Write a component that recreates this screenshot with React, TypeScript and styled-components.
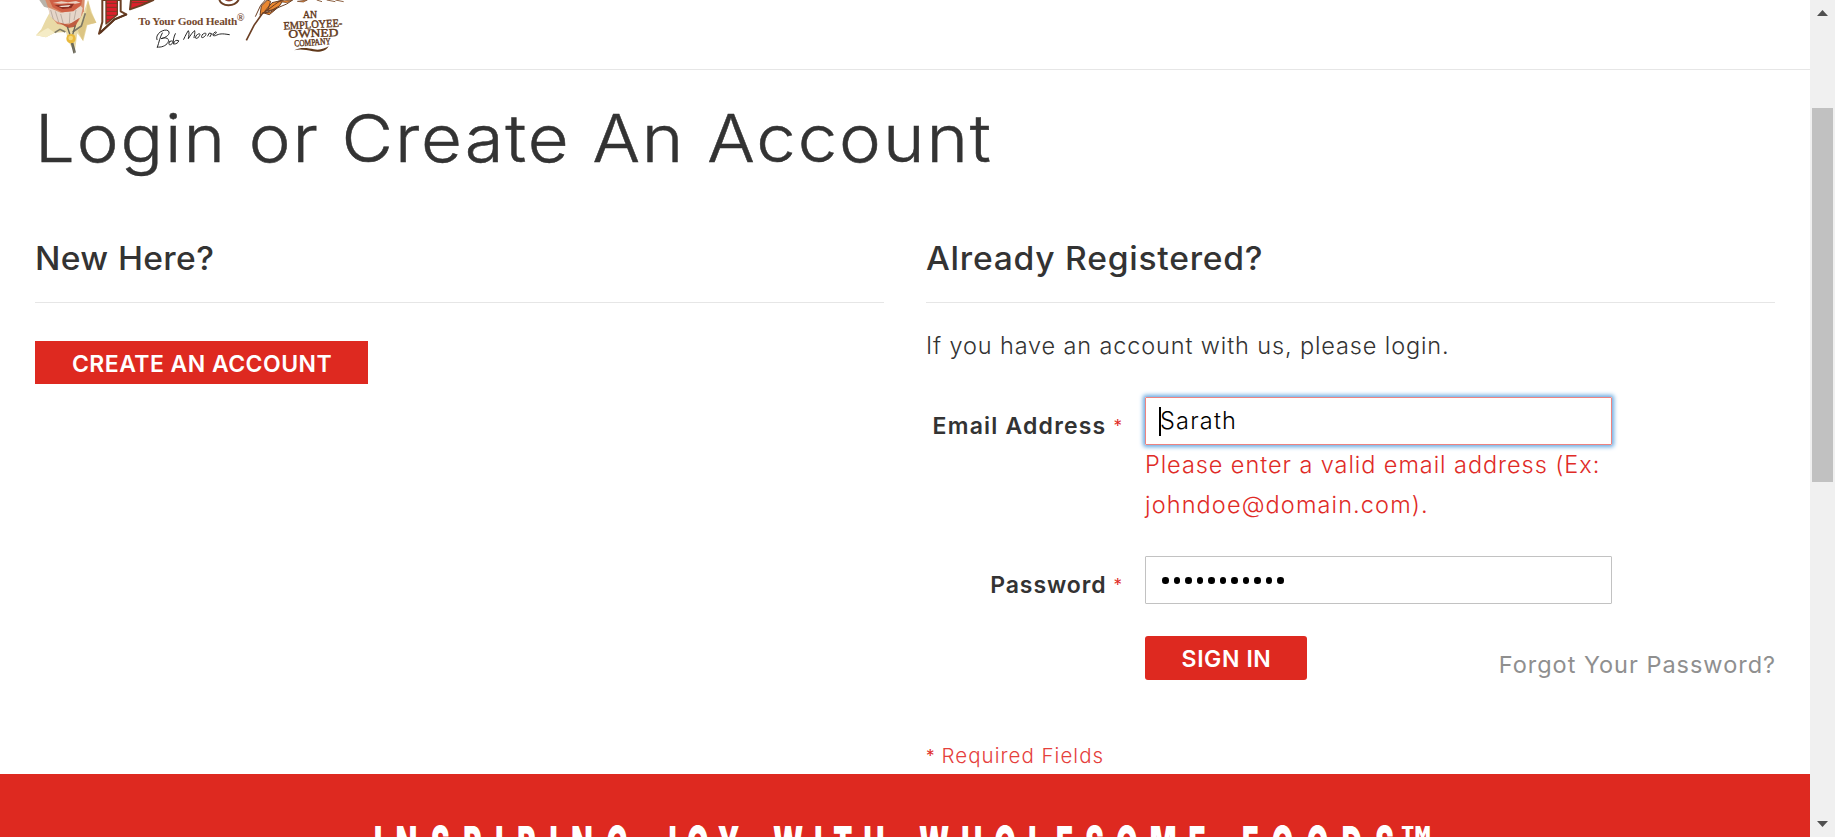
import React from "react";
import styled, { createGlobalStyle } from "styled-components";

const RED = "#de2920";
const INK = "#333333";

const GlobalStyle = createGlobalStyle`
  * { box-sizing: border-box; }
  body {
    margin: 0;
    background: #fff;
    color: ${INK};
    font-family: Inter, "Liberation Sans", sans-serif;
    overflow: hidden;
  }
`;

const Viewport = styled.div`
  display: flex;
  width: 1835px;
  height: 837px;
  overflow: hidden;
`;

const Page = styled.div`
  flex: 1;
  height: 837px;
  overflow: hidden;
`;

const Header = styled.header`
  height: 70px;
  padding-left: 20px;
  border-bottom: 1px solid #e6e6e6;
`;

const LogoArt = styled.svg`
  display: block;
  width: 340px;
  height: 68px;
`;

const Main = styled.main`
  height: 704px;
  padding: 28px 35px 0;
`;

const Title = styled.h1`
  margin: 0 0 60px;
  font-size: 66px;
  font-weight: 300;
  line-height: 80px;
  letter-spacing: 1.8px;
  white-space: nowrap;
  -webkit-text-stroke: 0.5px ${INK};
  transform: scaleX(1.07);
  transform-origin: left top;
`;

const Columns = styled.div`
  display: grid;
  grid-template-columns: 849px 849px;
  justify-content: space-between;
`;

const Column = styled.section`
  min-width: 0;
`;

const SectionHead = styled.div`
  height: 65px;
  padding-top: 1px;
  border-bottom: 1px solid #e6e6e6;
`;

const SectionTitle = styled.h2<{ $spacing: string }>`
  display: inline-block;
  margin: 0;
  font-size: 32px;
  font-weight: 500;
  line-height: 40px;
  letter-spacing: ${(p) => p.$spacing};
  white-space: nowrap;
  transform: scaleX(1.05);
  transform-origin: left top;
`;

const Button = styled.button<{ $width: number; $height: number; $round?: boolean; $spacing: string }>`
  display: flex;
  align-items: center;
  justify-content: center;
  flex: none;
  width: ${(p) => p.$width}px;
  height: ${(p) => p.$height}px;
  padding: 2px 0 0 1px;
  border: 0;
  border-radius: ${(p) => (p.$round ? 3 : 0)}px;
  background: ${RED};
  color: #fff;
  font: 600 23px Inter, sans-serif;
  letter-spacing: ${(p) => p.$spacing};
`;

const CreateRow = styled.div`
  padding-top: 38px;
`;

const Intro = styled.p`
  margin: 23px 0 31px;
  font-size: 23.5px;
  font-weight: 300;
  line-height: 40px;
  letter-spacing: 0.87px;
`;

const Field = styled.div`
  display: grid;
  grid-template-columns: 196px 467px;
  column-gap: 23px;
`;

const Label = styled.label<{ $spacing: string }>`
  display: flex;
  justify-content: flex-end;
  gap: 7px;
  height: 48px;
  padding-top: 9px;
  font-size: 23px;
  font-weight: 600;
  line-height: 40px;
  letter-spacing: ${(p) => p.$spacing};
`;

const Star = styled.span`
  color: #e02b27;
  font-size: 17px;
  font-weight: 400;
  letter-spacing: 0;
`;

const Control = styled.div<{ $invalid?: boolean }>`
  display: flex;
  align-items: center;
  height: 48px;
  padding-left: 14px;
  border: 1px solid ${(p) => (p.$invalid ? "#ed8380" : "#c2c2c2")};
  border-radius: 1px;
  box-shadow: ${(p) => (p.$invalid ? "0 0 4px 1.5px #68a8e0" : "none")};
  color: #000;
  font-size: 23.5px;
  font-weight: 300;
  letter-spacing: 1.2px;
`;

const Value = styled.span`
  padding-bottom: 2px;
`;

const Caret = styled.span`
  width: 2px;
  height: 29px;
  margin: 0 -1px 0 -1px;
  background: #000;
`;

const Dots = styled.span`
  display: flex;
  gap: 5px;
  padding: 1px 0 0 2px;
`;

const Dot = styled.i`
  width: 6.5px;
  height: 6.5px;
  border-radius: 50%;
  background: #000;
`;

const ErrorText = styled.p`
  margin: 0 0 31px;
  color: #e02b27;
  font-size: 23.5px;
  font-weight: 300;
  line-height: 40px;
  white-space: nowrap;
`;

const ErrorLine = styled.span<{ $spacing: string }>`
  display: block;
  letter-spacing: ${(p) => p.$spacing};
`;

const Actions = styled.div`
  display: flex;
  justify-content: space-between;
  align-items: flex-start;
  height: 76px;
  padding: 32px 0 0 219px;
`;

const Forgot = styled.a`
  padding-top: 9px;
  margin-right: -1px;
  color: #8f8f8f;
  font-size: 23.5px;
  font-weight: 400;
  line-height: 40px;
  letter-spacing: 0.98px;
  white-space: nowrap;
`;

const Required = styled.p`
  display: flex;
  gap: 7px;
  margin: 61px 0 0;
  color: #e5403c;
  font-size: 20.5px;
  font-weight: 300;
  line-height: 30px;
  letter-spacing: 1.02px;
`;

const Banner = styled.footer`
  display: flex;
  height: 63px;
  padding: 46px 0 0 374px;
  overflow: hidden;
  background: ${RED};
  color: #fff;
`;

const BannerWord = styled.span<{ $slot: number; $spacing: number; $scale?: number }>`
  flex: none;
  width: ${(p) => p.$slot}px;
  font-size: 48px;
  font-weight: 900;
  line-height: 48px;
  letter-spacing: ${(p) => p.$spacing}px;
  white-space: nowrap;
  transform: scaleX(${(p) => p.$scale ?? 0.58});
  transform-origin: left top;
`;

const ScrollTrack = styled.div`
  display: flex;
  flex-direction: column;
  align-items: center;
  width: 25px;
  height: 837px;
  padding: 10px 0;
  background: #f0f0f0;
`;

const ScrollThumb = styled.div`
  width: 21px;
  height: 374px;
  margin: 92px 0 auto;
  background: #c1c1c1;
`;

const ArrowIcon = styled.svg`
  display: block;
  width: 11px;
  height: 6px;
  fill: #505050;
`;

function Logo() {
  return (
    <LogoArt viewBox="0 0 1020 204" aria-label="Bob's Red Mill">
      {/* portrait: shirt collar, beard, mouth and bolo tie */}
      <path d="M48 106 64 88 77 60 88 40 190 40 204 0 216 38 229 68 202 76 190 124 172 100 164 159 146 126 138 96 104 98 78 112Z" fill="#e9daa6" />
      <path d="M48 106 72 90 84 84 104 98 78 112Z" fill="#f5ecc6" />
      <path d="M204 0 212 36 229 68 200 74 188 122 174 92 196 54Z" fill="#dcc584" />
      <path d="M104 98 120 88 136 96M158 96 184 78 196 40" fill="none" stroke="#7d7865" strokeWidth="5" />
      <path d="M58 0H84L92 26 72 20Z" fill="#b9b3aa" />
      <path d="M76 0H194L192 34 174 66 150 78 112 72 94 50Z" fill="#d98e6c" />
      <path d="M84 22 98 28 122 38 160 32 182 18 188 24 182 52 160 68 132 72 108 64 90 48Z" fill="#e6d6c9" />
      <path d="M92 30 100 58M106 34 116 66M122 42 130 72M150 38 148 70M168 30 162 60" stroke="#bcaea2" strokeWidth="3" fill="none" />
      <path d="M88 0H186L184 14 160 34 126 37 98 22Z" fill="#cf5f44" />
      <path d="M98 9 124 4 144 7 168 3 182 8 166 11 144 10 122 11Z" fill="#ead2c2" />
      <path d="M104 16 132 14 162 11 154 24 128 27Z" fill="#8c2f22" />
      <path d="M116 18 152 15 146 20 124 21Z" fill="#f4e6da" />
      <path d="M118 68 146 74 178 54 166 80 144 84Z" fill="#bf5c40" />
      <path d="M142 80 150 104M166 76 158 104M154 128 162 160M158 128 166 158" stroke="#686659" strokeWidth="4" fill="none" />
      <circle cx="153" cy="116" r="14" fill="#e9b93c" />
      <circle cx="152" cy="114" r="7" fill="#f6d979" />

      {/* lower ends of the red lettering */}
      <g stroke="#6b3f24" strokeLinejoin="round">
        <path d="M247 0V66L237 101 284 58 319 43 302 34V0Z" fill="#fff" strokeWidth="6" />
        <path d="M258 0V72L292 44V0Z" fill="#dc1f2b" strokeWidth="4" />
        <path d="M333 0 330 28 364 16 400 0Z" fill="#dc1f2b" strokeWidth="6" />
        <path d="M258 10H292M258 22H292M258 34H292M258 46H290M258 58H276M336 8H380" strokeWidth="2.5" fill="none" />
        <path d="M598 0C606 20 642 22 656 0" fill="none" strokeWidth="6" />
        <path d="M612 -4C620 5 634 5 642 -4" fill="#dc1f2b" strokeWidth="3" />
      </g>
      <path d="M240 99 284 58 320 43" fill="none" stroke="#5a341e" strokeWidth="6" />

      {/* wheat stalk */}
      <path d="M679 121 702 76 726 42 748 8" fill="none" stroke="#6b3f24" strokeWidth="5" />
      <path d="M720 46 724 18 742 0 752 4 744 28ZM734 34 756 8 790 0 778 18 756 30ZM728 38 752 36 772 24 748 44Z" fill="#e98731" stroke="#6b3f24" strokeWidth="3" />
      <path d="M706 50 722 16 736 0M730 40 764 14 784 0M738 38 800 12 818 0" fill="none" stroke="#6b3f24" strokeWidth="3" />
      <path d="M774 4 818 0 800 8ZM832 4 862 0 850 6Z" fill="#e98731" stroke="#6b3f24" strokeWidth="2" />
      <path d="M890 0 906 5M920 0 946 5M946 0 971 5" fill="none" stroke="#8c6142" strokeWidth="3" />

      <g fill="#75492f" fontFamily="Liberation Serif, serif" fontWeight="700">
        <text x="355" y="74" fontSize="34" textLength="297" lengthAdjust="spacing">To Your Good Health</text>
        <text x="650" y="62" fontSize="31" fontWeight="700">®</text>
        <g fill="#5f3719" fontWeight="400" stroke="#5f3719" strokeWidth="1.2">
          <text x="849" y="54" fontSize="31" textLength="42" lengthAdjust="spacingAndGlyphs">AN</text>
          <text x="791" y="84" fontSize="33" textLength="176" lengthAdjust="spacingAndGlyphs" transform="rotate(-3 880 78)">EMPLOYEE-</text>
          <text x="805" y="111" fontSize="34" textLength="150" lengthAdjust="spacingAndGlyphs" transform="rotate(-2 880 100)">OWNED</text>
          <text x="823" y="136" fontSize="28" textLength="109" lengthAdjust="spacingAndGlyphs" transform="rotate(-4 878 128)">COMPANY</text>
        </g>
      </g>
      <path d="M823 151C842 140 864 144 882 148S914 145 926 139C918 154 897 158 878 154 856 149 840 146 823 151Z" fill="#5f3719" />

      {/* handwritten signature */}
      <path
        d="M427 99C420 111 417 127 412 142M411 119C403 97 443 81 447 96 450 107 430 115 423 116 438 110 450 116 444 127 438 138 423 143 412 141M450 123C442 132 449 139 456 131 463 123 455 119 450 126M466 101C461 111 459 122 460 132 468 133 476 128 476 122 468 119 463 123 461 129M491 118C497 105 502 96 505 92 509 97 506 108 505 116 511 106 519 95 524 92 526 99 522 109 522 113M530 105C521 117 530 118 537 110 544 99 536 99 531 105M548 103C539 115 548 116 556 107 562 97 553 98 548 103M563 108 568 99 575 101 570 110M580 105C589 102 592 94 586 96 576 101 576 109 586 107 599 101 605 100 628 104"
        fill="none"
        stroke="#272727"
        strokeWidth="3"
        strokeLinecap="round"
        strokeLinejoin="round"
      />
    </LogoArt>
  );
}

const passwordLength = 11;

export default function App() {
  return (
    <Viewport>
      <GlobalStyle />
      <Page>
        <Header>
          <Logo />
        </Header>
        <Main>
          <Title>Login or Create An Account</Title>
          <Columns>
            <Column>
              <SectionHead>
                <SectionTitle $spacing="0.35px">New Here?</SectionTitle>
              </SectionHead>
              <CreateRow>
                <Button $width={333} $height={43} $spacing="0.45px">CREATE AN ACCOUNT</Button>
              </CreateRow>
            </Column>
            <Column>
              <SectionHead>
                <SectionTitle $spacing="0.72px">Already Registered?</SectionTitle>
              </SectionHead>
              <Intro>If you have an account with us, please login.</Intro>
              <Field>
                <Label $spacing="1.2px">
                  Email Address <Star>*</Star>
                </Label>
                <div>
                  <Control $invalid>
                    <Caret />
                    <Value>Sarath</Value>
                  </Control>
                  <ErrorText>
                    <ErrorLine $spacing="0.93px">Please enter a valid email address (Ex:</ErrorLine>
                    <ErrorLine $spacing="1.12px">johndoe@domain.com).</ErrorLine>
                  </ErrorText>
                </div>
              </Field>
              <Field>
                <Label $spacing="0.9px">
                  Password <Star>*</Star>
                </Label>
                <Control>
                  <Dots>
                    {Array.from({ length: passwordLength }, (_, i) => (
                      <Dot key={i} />
                    ))}
                  </Dots>
                </Control>
              </Field>
              <Actions>
                <Button $width={162} $height={44} $round $spacing="0.6px">SIGN IN</Button>
                <Forgot>Forgot Your Password?</Forgot>
              </Actions>
              <Required>
                <Star>*</Star>Required Fields
              </Required>
            </Column>
          </Columns>
        </Main>
        <Banner>
          <BannerWord $slot={286} $spacing={23.7}>INSPIRING</BannerWord>
          <BannerWord $slot={113} $spacing={18}>JOY</BannerWord>
          <BannerWord $slot={146} $spacing={19}>WITH</BannerWord>
          <BannerWord $slot={323} $spacing={21}>WHOLESOME</BannerWord>
          <BannerWord $slot={158} $spacing={23.2}>FOODS</BannerWord>
          <BannerWord $slot={40} $spacing={0} $scale={1}>™</BannerWord>
        </Banner>
      </Page>
      <ScrollTrack>
        <ArrowIcon viewBox="0 0 11 6">
          <path d="M0 6 5.5 0 11 6Z" />
        </ArrowIcon>
        <ScrollThumb />
        <ArrowIcon viewBox="0 0 11 6">
          <path d="M0 0H11L5.5 6Z" />
        </ArrowIcon>
      </ScrollTrack>
    </Viewport>
  );
}
